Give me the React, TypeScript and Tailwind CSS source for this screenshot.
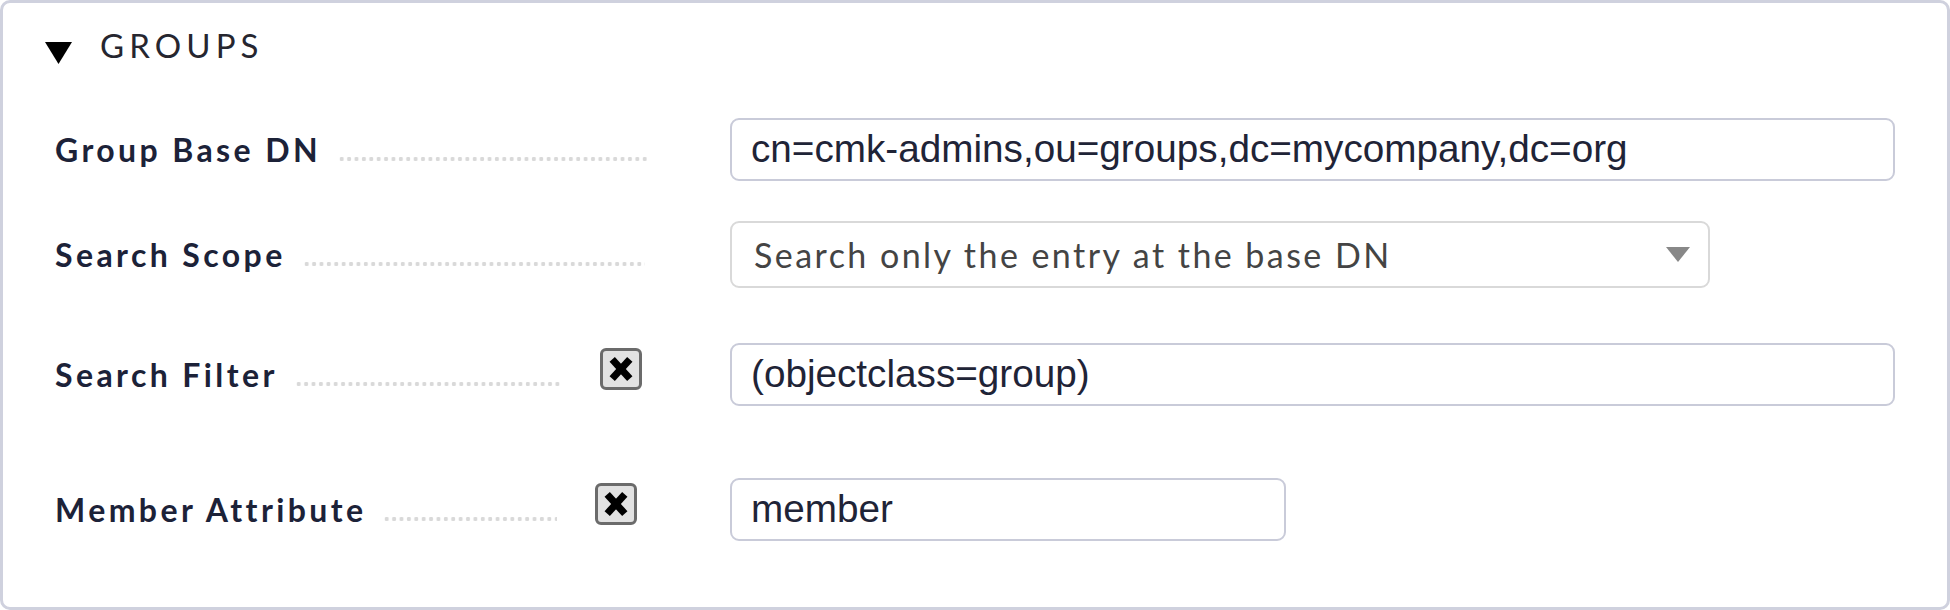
import React from "react";

const labelCls =
  "font-['Lato','Noto_Sans',sans-serif] font-bold text-[32px] leading-[32px] tracking-[3.4px] text-[#1c2238] whitespace-nowrap";

const dotsCls =
  "h-[6px] flex-1 ml-[17px] bg-[radial-gradient(circle,#d9d9d9_1.9px,transparent_2.4px)] bg-[length:7.4px_6px] bg-repeat-x bg-left";

const inputTextCls =
  "font-['Liberation_Sans',Arial,sans-serif] text-[38.7px] leading-none text-[#1f2437] whitespace-nowrap";

function Label({ text, width }: { text: string; width: string }) {
  return (
    <div className={`flex items-baseline ${width}`}>
      <span className={labelCls}>{text}</span>
      <div className={dotsCls} />
    </div>
  );
}

function ClearBox() {
  return (
    <div className="self-start mt-[5px] ml-[38px] w-[42px] h-[42px] rounded-[6px] border-[3px] border-[#6b6b6b] bg-[#e2e2e2] flex items-center justify-center">
      <svg width="26" height="26" viewBox="0 0 26 26">
        <line x1="4.2" y1="3.4" x2="21.8" y2="22.6" stroke="#000" strokeWidth="7.2" strokeLinecap="butt" />
        <line x1="21.8" y1="3.4" x2="4.2" y2="22.6" stroke="#000" strokeWidth="7.2" strokeLinecap="butt" />
      </svg>
    </div>
  );
}

function TextBox({ value, width }: { value: string; width: string }) {
  return (
    <div
      className={`${width} h-[63px] border-2 border-[#c9cbd9] rounded-[9px] bg-white flex items-center pl-[19px]`}
    >
      <span className={inputTextCls}>{value}</span>
    </div>
  );
}

export default function App() {
  return (
    <div className="w-[1950px] h-[610px] bg-white">
      <div className="h-full border-[3px] border-[#cfd1de] rounded-[10px] flex flex-col">
        <div className="flex items-start mt-[26px] h-[32px] pl-[42px]">
          <svg
            width="27"
            height="22"
            viewBox="0 0 27 22"
            className="mt-[13px] shrink-0"
          >
            <polygon points="0,0 27,0 13.5,22" fill="#000" />
          </svg>
          <span className="ml-[28px] font-['Lato','Noto_Sans',sans-serif] text-[33px] leading-[32px] tracking-[5.1px] text-[#26262f]">
            GROUPS
          </span>
        </div>

        {/* Row 1 */}
        <div className="flex items-center mt-[57px] pl-[52px]">
          <div className="w-[675px] flex items-center">
            <Label text="Group Base DN" width="w-[592px]" />
          </div>
          <TextBox
            value="cn=cmk-admins,ou=groups,dc=mycompany,dc=org"
            width="w-[1165px]"
          />
        </div>

        {/* Row 2 */}
        <div className="flex items-center mt-[40px] pl-[52px]">
          <div className="w-[675px] flex items-center">
            <Label text="Search Scope" width="w-[590px]" />
          </div>
          <div className="w-[980px] h-[67px] border-2 border-[#d9d9d9] rounded-[9px] bg-white flex items-center justify-between pl-[22px] pr-[18px]">
            <span className="font-['Lato','Noto_Sans',sans-serif] text-[34px] leading-none tracking-[2.45px] text-[#444444] whitespace-nowrap">
              Search only the entry at the base DN
            </span>
            <svg width="24" height="15" viewBox="0 0 24 15">
              <polygon points="0,0 24,0 12,15" fill="#888888" />
            </svg>
          </div>
        </div>

        {/* Row 3 */}
        <div className="flex items-center mt-[55px] pl-[52px]">
          <div className="w-[675px] flex items-center self-stretch">
            <Label text="Search Filter" width="w-[507px]" />
            <ClearBox />
          </div>
          <TextBox value="(objectclass=group)" width="w-[1165px]" />
        </div>

        {/* Row 4 */}
        <div className="flex items-center mt-[72px] pl-[52px]">
          <div className="w-[675px] flex items-center self-stretch">
            <Label text="Member Attribute" width="w-[502px]" />
            <ClearBox />
          </div>
          <TextBox value="member" width="w-[556px]" />
        </div>
      </div>
    </div>
  );
}
